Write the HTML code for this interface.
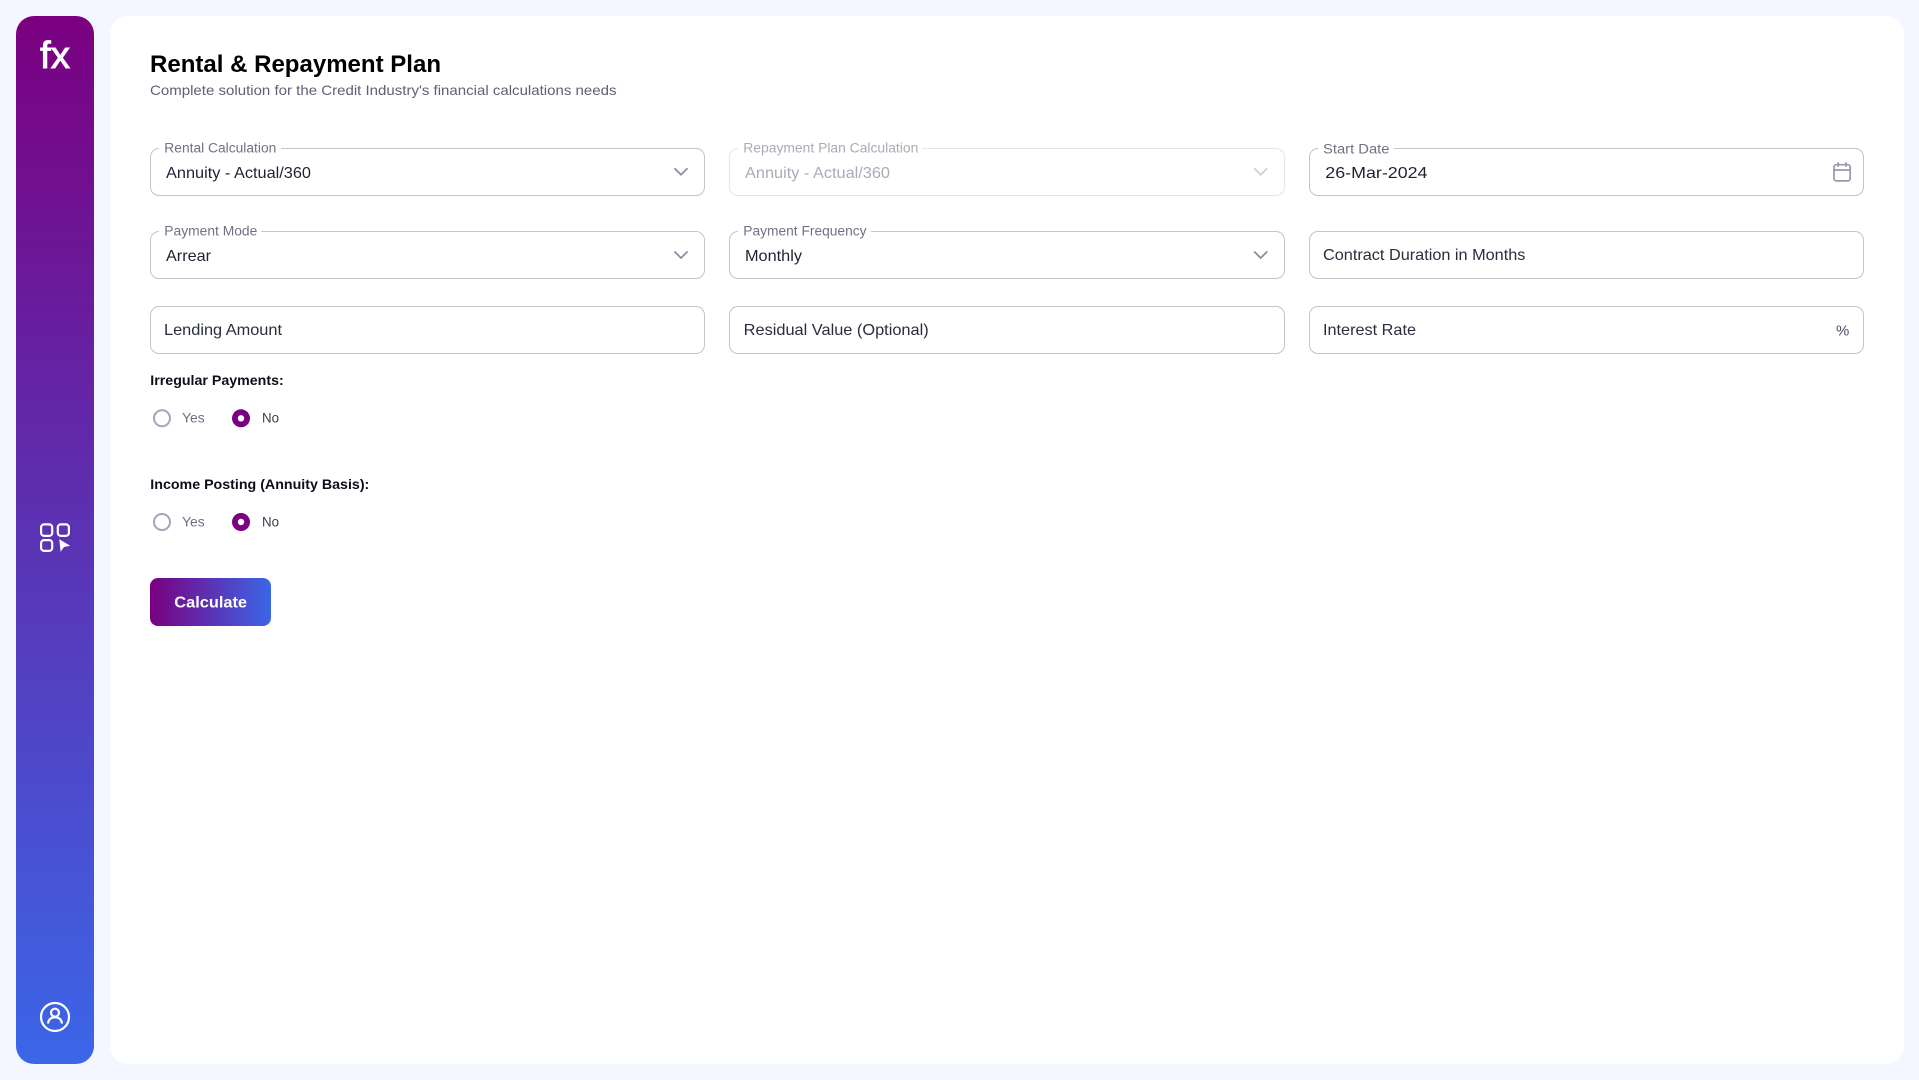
<!DOCTYPE html>
<html lang="en">
<head>
<meta charset="utf-8">
<title>Rental &amp; Repayment Plan</title>
<style>
html,body{margin:0;padding:0;width:1919px;height:1080px;overflow:hidden;background:#f4f7ff;font-family:"Liberation Sans",sans-serif}
.side{position:absolute;left:16px;top:16px;width:78px;height:1048px;border-radius:18px;background:linear-gradient(180deg,#7a0080 0%,#3b66e8 100%)}
.main{position:absolute;left:110px;top:16px;width:1794px;height:1048px;border-radius:18px;background:#fff}
.f{position:absolute;box-sizing:border-box;width:555.33px;height:48px;border:1px solid #c3c4cc;border-radius:9px;background:#fff}
.f.d{border-color:#e3e4ea}
.c1{left:150px}.c2{left:729.33px}.c3{left:1308.67px}
.r1{top:148px}.r2{top:231px}.r3{top:306px}
.btn{position:absolute;left:150px;top:578px;width:121px;height:48px;border-radius:8px;background:linear-gradient(90deg,#7a0080 0%,#3b66e8 100%)}
svg{position:absolute;left:0;top:0}
text{font-family:"Liberation Sans",sans-serif}
.lab{font-size:13.5px;fill:#6f7282}
.val{font-size:16px;fill:#1f2233}
.ph{font-size:16px;fill:#2a2d3e}
.dis{fill:#a9abb8}
.hd{font-size:14px;font-weight:700;fill:#0c0e1a}
.opt{font-size:14px}
</style>
</head>
<body>
<div class="side"></div>
<div class="main"></div>
<div class="f c1 r1"></div><div class="f c2 r1 d"></div><div class="f c3 r1"></div>
<div class="f c1 r2"></div><div class="f c2 r2"></div><div class="f c3 r2"></div>
<div class="f c1 r3"></div><div class="f c2 r3"></div><div class="f c3 r3"></div>
<div class="btn"></div>
<svg width="1919" height="1080" viewBox="0 0 1919 1080">
  <!-- sidebar -->
  <text x="40" y="68" font-size="38" fill="#fff" stroke="#fff" stroke-width="0.9" textLength="30" lengthAdjust="spacingAndGlyphs">fx</text>
  <g fill="none" stroke="#fff" stroke-width="2.2">
    <rect x="41.1" y="524.4" width="11.1" height="11.5" rx="3"/>
    <rect x="57.8" y="524.4" width="11.1" height="11.5" rx="3"/>
    <rect x="41.1" y="540.1" width="11.1" height="10.8" rx="3"/>
    <circle cx="55" cy="1017" r="14"/>
    <circle cx="55" cy="1012.7" r="4"/>
    <path d="M48 1023.5C48.5 1019 51.5 1017.3 55 1017.3S61.5 1019 62 1023.5"/>
  </g>
  <path d="M59.3 539.3L70.2 545.8L64 547L60.6 551.8Z" fill="#fff"/>

  <!-- heading -->
  <text x="150" y="72" font-size="24" font-weight="700" fill="#000" textLength="291" lengthAdjust="spacingAndGlyphs">Rental &amp; Repayment Plan</text>
  <text x="150" y="95" font-size="14" fill="#5d6173" textLength="466.5" lengthAdjust="spacingAndGlyphs">Complete solution for the Credit Industry's financial calculations needs</text>

  <!-- label gaps -->
  <g fill="#fff">
    <rect x="159" y="146" width="122" height="5"/>
    <rect x="738" y="146" width="184" height="5"/>
    <rect x="1318" y="146" width="76" height="5"/>
    <rect x="159" y="229" width="102" height="5"/>
    <rect x="738" y="229" width="133" height="5"/>
  </g>

  <!-- row 1 -->
  <text class="lab" x="164.3" y="152.5" textLength="112" lengthAdjust="spacingAndGlyphs">Rental Calculation</text>
  <text class="val" x="166" y="178" textLength="145" lengthAdjust="spacingAndGlyphs">Annuity - Actual/360</text>
  <text class="lab dis" x="743.3" y="152.5" textLength="175" lengthAdjust="spacingAndGlyphs">Repayment Plan Calculation</text>
  <text class="val dis" x="745" y="178" textLength="145" lengthAdjust="spacingAndGlyphs">Annuity - Actual/360</text>
  <text class="lab" x="1323" y="153.5" textLength="66.5" lengthAdjust="spacingAndGlyphs">Start Date</text>
  <text class="val" x="1325.3" y="178" textLength="102.2" lengthAdjust="spacingAndGlyphs">26-Mar-2024</text>

  <!-- row 2 -->
  <text class="lab" x="164.3" y="235.5" textLength="93" lengthAdjust="spacingAndGlyphs">Payment Mode</text>
  <text class="val" x="166" y="261" textLength="45" lengthAdjust="spacingAndGlyphs">Arrear</text>
  <text class="lab" x="743.3" y="235.5" textLength="123.2" lengthAdjust="spacingAndGlyphs">Payment Frequency</text>
  <text class="val" x="745" y="261" textLength="57" lengthAdjust="spacingAndGlyphs">Monthly</text>
  <text class="ph" x="1323" y="260" textLength="202.4" lengthAdjust="spacingAndGlyphs">Contract Duration in Months</text>

  <!-- row 3 -->
  <text class="ph" x="164" y="335" textLength="118" lengthAdjust="spacingAndGlyphs">Lending Amount</text>
  <text class="ph" x="743.7" y="335" textLength="185" lengthAdjust="spacingAndGlyphs">Residual Value (Optional)</text>
  <text class="ph" x="1323" y="335" textLength="93" lengthAdjust="spacingAndGlyphs">Interest Rate</text>
  <text x="1836" y="335.5" font-size="15" fill="#4a4d60" textLength="13.3" lengthAdjust="spacingAndGlyphs">%</text>

  <!-- chevrons -->
  <g fill="none" stroke-width="1.8" stroke-linecap="round" stroke-linejoin="round">
    <path d="M675 168.8L681 174.8L687 168.8" stroke="#8b8ea3"/>
    <path d="M1254.7 168.8L1260.7 174.8L1266.7 168.8" stroke="#ced0da"/>
    <path d="M675 252L681 258L687 252" stroke="#8b8ea3"/>
    <path d="M1254.7 252L1260.7 258L1266.7 252" stroke="#8b8ea3"/>
  </g>

  <!-- calendar -->
  <g fill="none" stroke="#9699ad" stroke-width="1.7" stroke-linecap="round">
    <rect x="1834" y="164.7" width="16.2" height="16.2" rx="2.4"/>
    <path d="M1834 170H1850.2M1838.2 162.8V166.2M1846 162.8V166.2"/>
  </g>

  <!-- radios -->
  <text class="hd" x="150.3" y="385" textLength="133.4" lengthAdjust="spacingAndGlyphs">Irregular Payments:</text>
  <circle cx="162" cy="418.3" r="8" fill="#fff" stroke="#a3a6bb" stroke-width="2"/>
  <text class="opt" x="182" y="422.7" fill="#6e7186" textLength="22.7" lengthAdjust="spacingAndGlyphs">Yes</text>
  <circle cx="241" cy="418.3" r="9" fill="#7a0080"/><circle cx="241" cy="418.3" r="3.2" fill="#fff"/>
  <text class="opt" x="262" y="422.7" fill="#3a3d50" textLength="17" lengthAdjust="spacingAndGlyphs">No</text>

  <text class="hd" x="150.3" y="489" textLength="219" lengthAdjust="spacingAndGlyphs">Income Posting (Annuity Basis):</text>
  <circle cx="162" cy="522" r="8" fill="#fff" stroke="#a3a6bb" stroke-width="2"/>
  <text class="opt" x="182" y="526.7" fill="#6e7186" textLength="22.7" lengthAdjust="spacingAndGlyphs">Yes</text>
  <circle cx="241" cy="522" r="9" fill="#7a0080"/><circle cx="241" cy="522" r="3.2" fill="#fff"/>
  <text class="opt" x="262" y="526.7" fill="#3a3d50" textLength="17" lengthAdjust="spacingAndGlyphs">No</text>

  <!-- button -->
  <text x="174.3" y="607.6" font-size="16" font-weight="700" fill="#fff" textLength="72.7" lengthAdjust="spacingAndGlyphs">Calculate</text>
</svg>
</body>
</html>
